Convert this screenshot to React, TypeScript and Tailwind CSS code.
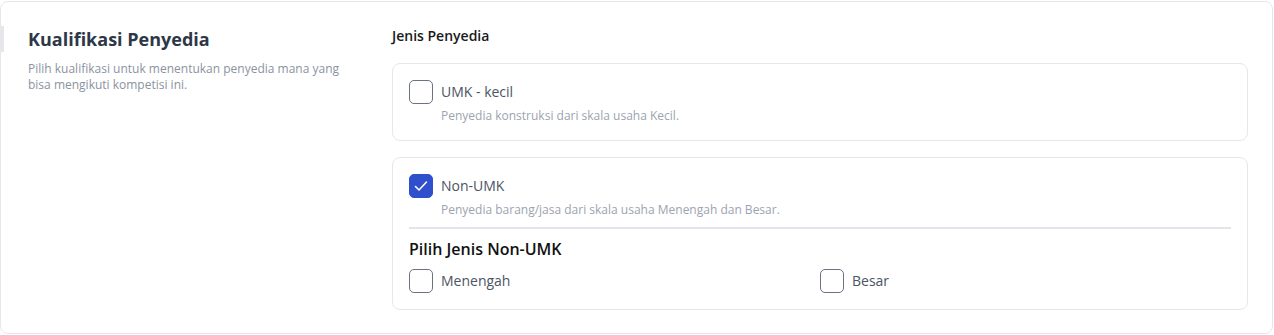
import { FC, useState } from 'react';

interface CheckboxProps {
  checked: boolean;
  onChange: () => void;
}

const Checkbox: FC<CheckboxProps> = ({ checked, onChange }) => (
  <button
    type="button"
    onClick={onChange}
    className={`w-6 h-6 shrink-0 rounded-[5px] flex items-center justify-center ${
      checked ? 'bg-[#2f4fcd] border border-[#2f4fcd]' : 'bg-white border-[1.5px] border-[#6b7280]'
    }`}
  >
    {checked && (
      <svg width="16" height="16" viewBox="0 0 16 16" fill="none">
        <path d="M2.5 8.5l3.5 3.5 7.5-8" stroke="white" strokeWidth="1.6" strokeLinecap="round" strokeLinejoin="round" />
      </svg>
    )}
  </button>
);

const App: FC = () => {
  const [umk, setUmk] = useState(false);
  const [nonUmk, setNonUmk] = useState(true);
  const [menengah, setMenengah] = useState(false);
  const [besar, setBesar] = useState(false);

  return (
    <div className="pt-px bg-white" style={{ fontFamily: '"Open Sans", "Noto Sans", sans-serif' }}>
      <div className="w-[1273px] border border-[#e5e7eb] rounded-lg bg-white flex pt-6 pb-[23px] pr-6">
        {/* Left: section info */}
        <div className="w-[391px] shrink-0">
          <div className="-ml-px border-l-4 border-[#e5e7eb] pl-6 h-[26px] flex items-center">
            <h2 className="text-[18px] leading-[26px] font-bold text-[#2d3748]">Kualifikasi Penyedia</h2>
          </div>
          <p className="pl-[27px] mt-[9px] w-[350px] text-[12px] leading-4 text-[#8b93a1]">
            Pilih kualifikasi untuk menentukan penyedia mana yang bisa mengikuti kompetisi ini.
          </p>
        </div>

        {/* Right: options */}
        <div className="flex-1">
          <p className="text-[14px] leading-5 font-semibold text-[#1a1a1a]">Jenis Penyedia</p>

          <div className="mt-[17px] space-y-4">
            {/* UMK */}
            <div className="border border-[#e5e7eb] rounded-lg p-4">
              <div className="flex items-start gap-2">
                <Checkbox checked={umk} onChange={() => setUmk(!umk)} />
                <div>
                  <p className="text-[14px] leading-6 text-[#4b5563]">UMK - kecil</p>
                  <p className="mt-1 text-[12px] leading-4 text-[#9ca3af]">Penyedia konstruksi dari skala usaha Kecil.</p>
                </div>
              </div>
            </div>

            {/* Non-UMK */}
            <div className="border border-[#e5e7eb] rounded-lg p-4">
              <div className="flex items-start gap-2">
                <Checkbox checked={nonUmk} onChange={() => setNonUmk(!nonUmk)} />
                <div>
                  <p className="text-[14px] leading-6 text-[#4b5563]">Non-UMK</p>
                  <p className="mt-1 text-[12px] leading-4 text-[#9ca3af]">
                    Penyedia barang/jasa dari skala usaha Menengah dan Besar.
                  </p>
                </div>
              </div>

              {nonUmk && (
                <>
                  <div className="mt-[9px] h-0.5 bg-[#e4e5eb]" />
                  <p className="mt-2 text-[16px] leading-6 font-semibold text-[#111111]">Pilih Jenis Non-UMK</p>
                  <div className="mt-2 grid grid-cols-2">
                    <div className="flex items-center gap-2">
                      <Checkbox checked={menengah} onChange={() => setMenengah(!menengah)} />
                      <span className="text-[14px] leading-6 text-[#4b5563]">Menengah</span>
                    </div>
                    <div className="flex items-center gap-2">
                      <Checkbox checked={besar} onChange={() => setBesar(!besar)} />
                      <span className="text-[14px] leading-6 text-[#4b5563]">Besar</span>
                    </div>
                  </div>
                </>
              )}
            </div>
          </div>
        </div>
      </div>
    </div>
  );
};

export default App;
